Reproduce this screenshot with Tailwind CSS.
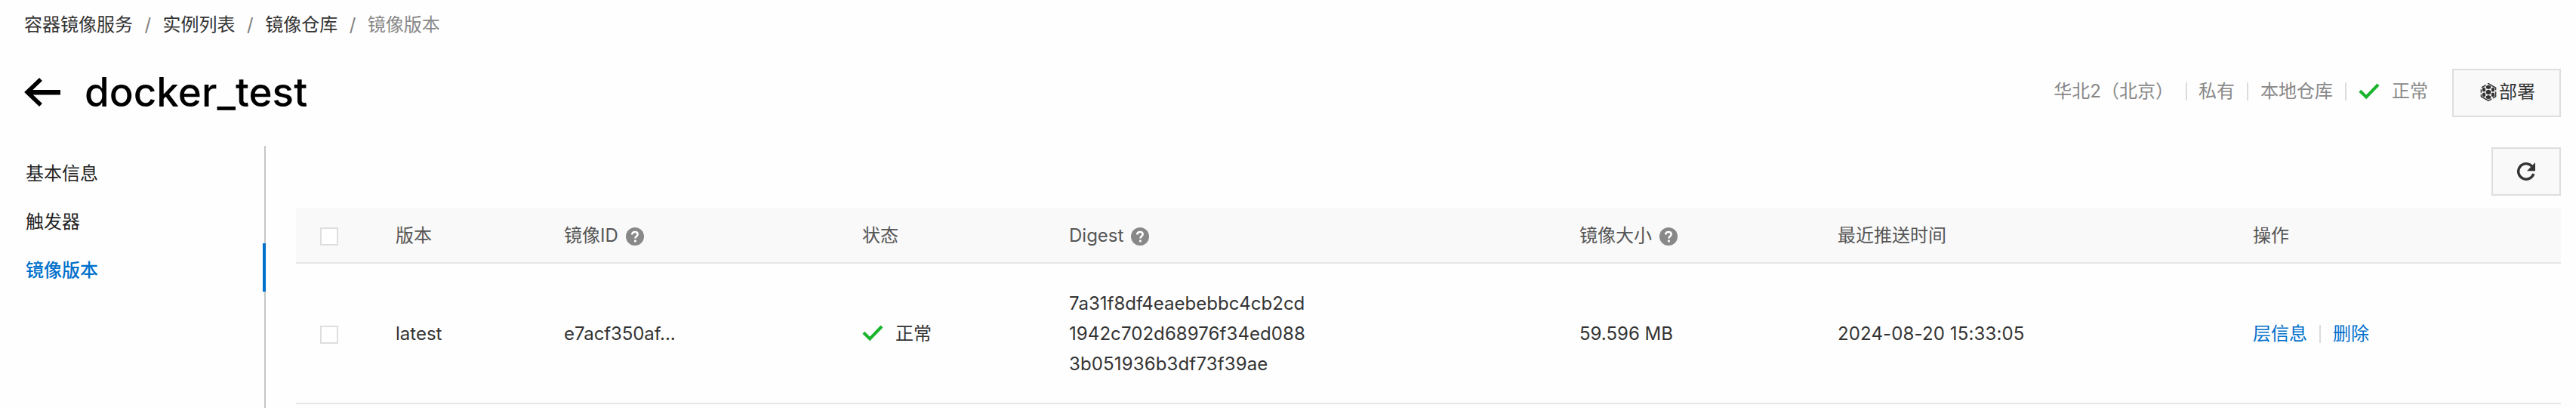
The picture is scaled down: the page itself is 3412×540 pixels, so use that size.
<!DOCTYPE html>
<html lang="zh-CN">
<head>
<meta charset="utf-8">
<title>docker_test</title>
<script src="https://cdn.jsdelivr.net/npm/@tailwindcss/browser@4"></script>
</head>
<body class="bg-[#fefefe]">
<svg class="hidden">
  <symbol id="help" viewBox="0 0 24 24">
    <circle cx="12" cy="12" r="12" fill="#888"/>
    <path d="M8.2 9.4C8.2 7 9.8 5.9 12 5.9s3.7 1.2 3.7 3.2c0 2.3-3.3 2.7-3.3 5.5" fill="none" stroke="#fff" stroke-width="2.5"/>
    <rect x="11" y="16.6" width="2.8" height="2.8" fill="#fff"/>
  </symbol>
  <symbol id="check" viewBox="0 0 28 22">
    <path d="M1.8 10.2 10.2 18.4 26 2" fill="none" stroke="#18b42c" stroke-width="4"/>
  </symbol>
  <symbol id="cell" viewBox="0 0 8 8" preserveAspectRatio="none">
    <path d="M4 0 8 2v4L4 8 0 6V2z"/>
  </symbol>
</svg>
<div class="flex h-[540px] w-[3412px] flex-col overflow-hidden font-[Inter,'Noto_Sans_CJK_SC',sans-serif] text-2xl/10 text-[#333]">
  <nav class="flex h-[65px] shrink-0 items-center pl-8 whitespace-nowrap">
    <a>容器镜像服务</a><span class="w-[39.6px] text-center text-[#808080]">/</span>
    <a>实例列表</a><span class="w-[39.6px] text-center text-[#808080]">/</span>
    <a>镜像仓库</a><span class="w-[39.6px] text-center text-[#808080]">/</span>
    <span class="text-[#888]">镜像版本</span>
  </nav>

  <header class="mt-[26px] flex h-16 shrink-0 items-center justify-between pr-5 pl-8">
    <div class="flex items-center pb-[3px]">
      <svg class="h-10 w-12" viewBox="0 0 48 40" fill="none" stroke="#000" stroke-width="6.4"><path stroke-width="5.6" d="M22 3 4.2 20 22 37"/><path d="M4 20.2h44"/></svg>
      <h1 class="ml-8 text-[53px]/[60px] font-medium text-black">docker_test</h1>
    </div>
    <div class="flex items-center">
      <div class="flex items-center pb-[5px] whitespace-nowrap text-[#888]">
        <span>华北2（北京）</span>
        <i class="mr-[15px] ml-4 h-6 w-0.5 bg-[#dcdcdc]"></i>
        <span>私有</span>
        <i class="mx-4 h-6 w-0.5 bg-[#dcdcdc]"></i>
        <span>本地仓库</span>
        <i class="mx-4 h-6 w-0.5 bg-[#dcdcdc]"></i>
        <svg class="h-[22px] w-7"><use href="#check"/></svg>
        <span class="ml-4">正常</span>
      </div>
      <button class="ml-8 flex h-16 w-36 items-center border-2 border-[#dedede] bg-[#f9f9f9] pb-0.5 pl-[34px]">
        <svg class="h-6 w-6" viewBox="0 0 24 24" fill="#333">
          <g fill="none" stroke="#333" stroke-width="1.5">
            <path d="M3 6 8.6 2.6M11 1.2l1-.6 9.6 5.7v3M21.6 11.2v6.5l-3.8 2.2M16.2 20.9 12 23.3l-9.6-5.6v-3M2.4 12.8V8.2"/>
          </g>
          <use href="#cell" x="8.5" y="8.5" width="7" height="7"/>
          <use href="#cell" x="8.6" y="2.5" width="6.8" height="5.6"/>
          <use href="#cell" x="8.6" y="15.9" width="6.8" height="5.6"/>
          <use href="#cell" x="3.8" y="5.6" width="4.5" height="6.1"/>
          <use href="#cell" x="15.7" y="5.6" width="4.5" height="6.1"/>
          <use href="#cell" x="3.8" y="12.3" width="4.5" height="6.1"/>
          <use href="#cell" x="15.7" y="12.3" width="4.5" height="6.1"/>
        </svg>
        <span class="ml-0.5">部署</span>
      </button>
    </div>
  </header>

  <div class="mt-[38px] flex grow">
    <aside class="w-[352px] shrink-0 border-r-2 border-[#c6c6c6] pt-px text-[#222]">
      <a class="flex h-16 items-center pt-2 pl-[34px]">基本信息</a>
      <a class="flex h-16 items-center pt-2 pl-[34px]">触发器</a>
      <a class="-mr-0.5 flex h-16 items-center border-r-4 border-[#0070cc] pt-2 pl-[34px] font-medium text-[#0070cc]">镜像版本</a>
    </aside>

    <main class="ml-10 w-[3000px] pt-0.5">
      <div class="flex h-20 items-start justify-end">
        <button class="flex h-16 w-[92px] items-center justify-center border-2 border-[#dedede] bg-[#f9f9f9]">
          <svg class="h-6 w-6" viewBox="0 0 24 24"><path d="M21.8 15A10.3 10.3 0 1 1 19.6 5" fill="none" stroke="#333" stroke-width="3.4"/><path d="M24 0v11.2H13z" fill="#333"/></svg>
        </button>
      </div>

      <div class="grid h-[74px] grid-cols-[100px_223px_395px_274px_676px_342px_550px_440px] items-center border-b-2 border-[#e6e6e6] bg-[#f9f9f9] pt-0.5 text-[#555] *:px-8">
        <div><span class="mt-0.5 block size-6 border-2 border-[#dedede] bg-white"></span></div>
        <div>版本</div>
        <div class="flex items-center">镜像ID<svg class="mt-0.5 ml-2.5 size-6"><use href="#help"/></svg></div>
        <div>状态</div>
        <div class="flex items-center">Digest<svg class="mt-0.5 ml-2.5 size-6"><use href="#help"/></svg></div>
        <div class="flex items-center">镜像大小<svg class="mt-0.5 ml-2.5 size-6"><use href="#help"/></svg></div>
        <div>最近推送时间</div>
        <div>操作</div>
      </div>

      <div class="grid h-[186px] grid-cols-[100px_223px_395px_274px_676px_342px_550px_440px] items-center border-b-2 border-[#e6e6e6] pt-0.5 *:px-8">
        <div><span class="mt-0.5 block size-6 border-2 border-[#dedede] bg-white"></span></div>
        <div>latest</div>
        <div class="tracking-[-0.1px]">e7acf350af...</div>
        <div class="flex items-center"><svg class="mb-0.5 h-[22px] w-7"><use href="#check"/></svg><span class="ml-4">正常</span></div>
        <div><p>7a31f8df4eaebebbc4cb2cd</p><p class="tracking-[0.08px]">1942c702d68976f34ed088</p><p class="tracking-[0.14px]">3b051936b3df73f39ae</p></div>
        <div>59.596 MB</div>
        <div class="tracking-[0.14px]">2024-08-20 15:33:05</div>
        <div class="flex items-center text-[#0070cc]"><a>层信息</a><i class="mx-4 h-6 w-0.5 bg-[#dcdcdc]"></i><a>删除</a></div>
      </div>
    </main>
  </div>
</div>
</body>
</html>
